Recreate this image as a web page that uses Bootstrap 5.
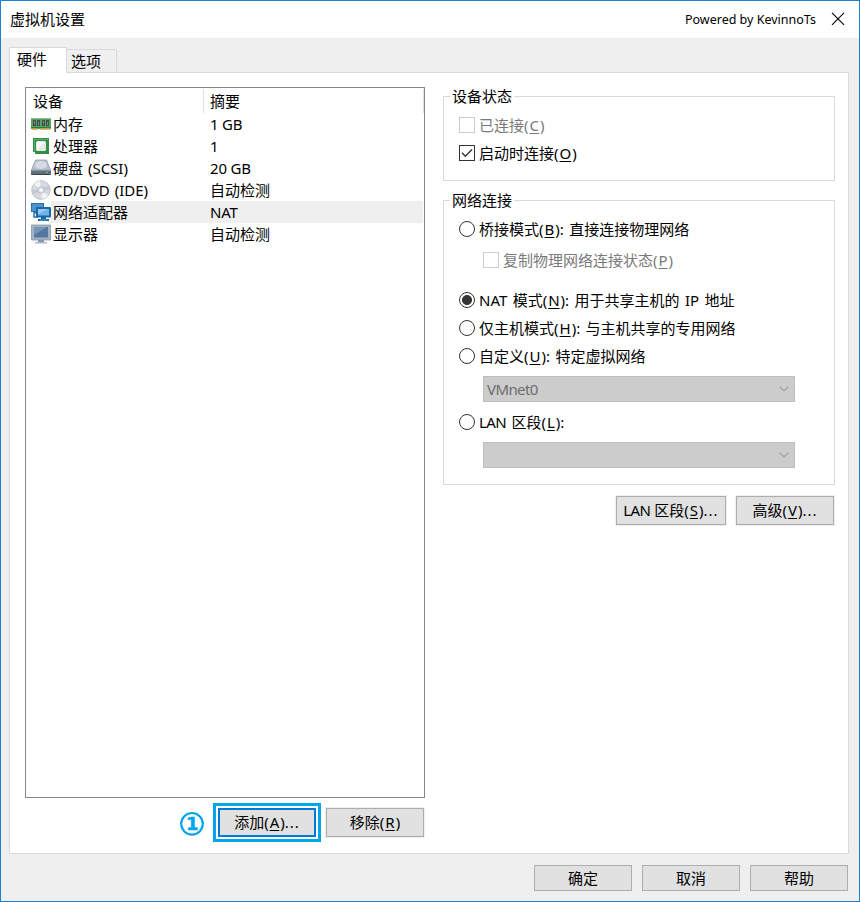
<!DOCTYPE html>
<html lang="zh-CN">
<head>
<meta charset="utf-8">
<title>虚拟机设置</title>
<link rel="stylesheet" href="https://cdn.jsdelivr.net/npm/bootstrap@5.3.0/dist/css/bootstrap.min.css">
<style>
body{font:15px/22px "Noto Sans","Noto Sans CJK SC",sans-serif;color:#000;background:#fff;overflow:hidden}
svg{display:block;flex:none}
u{text-underline-offset:2px;text-decoration-thickness:1px;margin:0 1px}
.win{width:860px;height:902px;border:1px solid #1c80cf;background:#efefef}
.titlebar{height:37px;background:#fff;padding:0 13px 2px 9px}
.byline{font-size:12.5px;margin:2px 14px 0 0}
.tabs{height:34px;padding:9px 0 0 8px}
.tabs .nav-link{color:#000;border:1px solid #d9d9d9;border-radius:0;background:#efefef;border-bottom:0;line-height:22px;padding:0;text-align:left}
.tabs .nav-link.active{width:58px;height:26px;background:#fff;margin-bottom:-1px;position:relative;color:#000;padding:0 0 4px 7px}
.tabs .nav-link.idle{width:50px;height:23px;margin-top:2px;border-left:0;padding-left:4px}
.pane{margin:0 10px 0 8px;height:782px;border:1px solid #d9d9d9;background:#fff;padding:14px 13px 0 15px}
.devices{width:400px;height:711px;border:1px solid #828790}
.dev-head{height:25px}
.dev-head>span{height:24px;margin-top:1px;line-height:24px;border-right:1px solid #e0e0e0}
.name-col{width:178px;flex:none;padding-left:7px}
.dev-row{height:22px;line-height:22px;word-spacing:1px}
.dev-row svg{margin-left:5px}
.dev-name{width:153px;height:22px;padding-left:2px;flex:none;white-space:nowrap}
.dev-val{width:219px;height:22px;padding-left:6px}
.dev-row .dev-val{word-spacing:0;letter-spacing:-.2px}
.dev-row .cjk-val{letter-spacing:0}
.chosen .dev-name,.chosen .dev-val{background:#efefef}
.win .btn{--bs-btn-color:#000;--bs-btn-bg:#e1e1e1;--bs-btn-border-color:#adadad;border-radius:0;font-size:15px;line-height:22px;padding:0 0 1px;width:98px;white-space:nowrap}
.win .tall{height:29px;box-shadow:0 0 0 1px #efefef}
.win .lan-btn{width:110px}
.win .add-btn{height:29px;border:2px solid #0078d7;outline:3px solid #00a5ec;outline-offset:2px}
.dots{letter-spacing:1px}
.left-actions{gap:10px;margin-top:10px;padding-right:1px}
.side{width:392px}
.group{border:1px solid #d9d9d9}
.group-title{width:max-content;margin:-12px 0 0 6px;padding:0 2px;background:#fff;height:22px}
.g-state{height:85px;margin-top:9px}
.g-net{height:285px;margin-top:19px}
.opt{height:28px;padding-left:15px;white-space:nowrap;word-spacing:1.5px}
.first{margin-top:4px}
.opt label{margin:-1px 0 0 4px}
.opt .form-check-input{width:16px;height:16px;margin:0;flex:none;border:1px solid #333;background-color:#fff;opacity:1}
.opt .form-check-input[type=checkbox]{border-radius:0}
.opt .form-check-input:checked[type=checkbox]{background-image:url("data:image/svg+xml,%3csvg xmlns='http://www.w3.org/2000/svg' viewBox='0 0 14 14'%3e%3cpath d='M2 6.8 5.3 10.2 12 3.5' fill='none' stroke='%23333' stroke-width='1.4'/%3e%3c/svg%3e")}
.opt .form-check-input:checked[type=radio]{background-image:radial-gradient(circle,#333 4.6px,transparent 5.3px)}
.opt .form-check-input:disabled{border-color:#ccc}
.opt .form-check-input:disabled~label{opacity:1}
.sub{padding-left:39px;margin-top:3px}
.nat{margin-top:12px}
.latin{letter-spacing:-.6px}
.off{color:#7a7a7a}
.combo{width:312px;height:26px;margin:6px 0 6px 39px;background:#ccc;border:1px solid #bfbfbf;color:#6d6d6d;padding:0 4px 0 3px}
.side-actions{gap:10px;margin-top:11px;padding-right:1px}
.foot{padding:11px 11px 0 0;gap:10px}
.foot .btn{height:26px}
</style>
</head>
<body>
<div class="win">
  <div class="titlebar d-flex align-items-center">
    <span class="me-auto">虚拟机设置</span>
    <span class="byline">Powered by KevinnoTs</span>
    <svg width="16" height="14" viewBox="0 0 16 14"><path d="M2 .8 14 12.800M14 .8 2 12.800" stroke="#000" stroke-width="1.100"/></svg>
  </div>
  <nav class="tabs nav">
    <button class="nav-link active">硬件</button><button class="nav-link idle">选项</button>
  </nav>
  <main class="pane d-flex justify-content-between align-items-start">
    <section>
      <div class="devices">
        <div class="dev-head d-flex"><span class="name-col">设备</span><span class="dev-val flex-grow-1">摘要</span></div>
        <div class="dev-row d-flex align-items-center">
          <svg width="20" height="20" viewBox="0 0 20 20"><path fill="#4fa65c" d="M0 4h20v11H0z"/><path fill="#86c489" d="M0 4h20v1H0z"/><path fill="#464e50" d="M2 6h3v6H2zm4 0h3v6H6zm5 0h3v6h-3zm4 0h3v6h-3z"/><path stroke="#7c8588" d="M3.500 7v3M7.500 8v3M12.500 7v3M16.500 8v3"/><path fill="#2f7d40" d="M0 13h20v1H0z"/><path fill="#efb267" d="M1 14.500h6V16H1zm8 0h10V16H9z"/></svg>
          <span class="dev-name">内存</span><span class="dev-val">1 GB</span></div>
        <div class="dev-row d-flex align-items-center">
          <svg width="20" height="20" viewBox="0 0 20 20"><path fill="#2e9049" d="M2 2h16v16H2z"/><path fill="#58a96a" d="M3 3h14v1H4v13H3z"/><rect x="5" y="5" width="10" height="10" rx="1.500" fill="#e6e8e6"/><path fill="#fafafa" d="M6 6h8l-8 8z"/><path fill="#fff" d="M2 16h2v2H2z"/></svg>
          <span class="dev-name">处理器</span><span class="dev-val">1</span></div>
        <div class="dev-row d-flex align-items-center">
          <svg width="20" height="20" viewBox="0 0 20 20"><path fill="#b7c1cd" stroke="#94a0ad" stroke-width=".8" d="M4.500 2h11L19.500 12H.500z"/><ellipse cx="10" cy="7" rx="6" ry="4" fill="#d4dbe3"/><path fill="#626d7b" d="M0 12h20v5H0z"/><path fill="#8d98a5" d="M0 12h20v1H0z"/><path fill="#39424d" d="M1 16h18v1H1z"/><path fill="#59db83" d="M15 14h2v1h-2z"/></svg>
          <span class="dev-name">硬盘 (SCSI)</span><span class="dev-val">20 GB</span></div>
        <div class="dev-row d-flex align-items-center">
          <svg width="20" height="20" viewBox="0 0 20 20"><circle cx="10" cy="10" r="9.300" fill="#d6dae0" stroke="#b3b8be" stroke-width=".8"/><path fill="#f1f3f5" d="M10 10 3 4a9 9 0 0 1 6-3zM10 10l7 6a9 9 0 0 1-6 3z"/><path fill="#c3c9d1" d="m10 10 8-5a9 9 0 0 1 1 5zM10 10l-8 5a9 9 0 0 1-1-5z"/><circle cx="10" cy="10" r="3.300" fill="#dfe3e8" stroke="#a6adb7" stroke-width=".7"/><circle cx="10" cy="10" r="1.400" fill="#fff"/></svg>
          <span class="dev-name">CD/DVD (IDE)</span><span class="dev-val cjk-val">自动检测</span></div>
        <div class="dev-row chosen d-flex align-items-center">
          <svg width="20" height="20" viewBox="0 0 20 20"><path fill="#2872ac" d="M0 1h13v9H0z"/><path fill="#4b94d0" d="M1 2h11v7H1z"/><path fill="none" stroke="#2574ae" stroke-width="1.500" d="M3 10v5h4"/><path fill="#2872ac" d="M3 10h3v1.500H3z"/><rect x="5" y="5" width="15" height="10.500" rx="1" fill="#1b67a5"/><path fill="#6db4ea" d="M7 7h11v6.500H7z"/><path fill="#97cbf2" d="M7 7h10L7 12z"/><path fill="#1b67a5" d="M10 15h5v2h3v2H7v-2h3z"/><path fill="#5a9ed5" d="M9 17.500h7v1H9z"/></svg>
          <span class="dev-name">网络适配器</span><span class="dev-val">NAT</span></div>
        <div class="dev-row d-flex align-items-center">
          <svg width="20" height="20" viewBox="0 0 20 20"><path fill="#a5b4c5" stroke="#8496aa" stroke-width=".8" d="M.500 1h19v15H.500z"/><path fill="#55779f" d="M3 3h14v10.500H3z"/><path fill="#7895b6" d="M3 3h13L3 11z"/><path fill="#8797aa" d="M7 16h6v2H7z"/><path fill="#acb8c6" d="M4 18h12v1.500H4z"/></svg>
          <span class="dev-name">显示器</span><span class="dev-val cjk-val">自动检测</span></div>
      </div>
      <div class="left-actions d-flex justify-content-end align-items-center">
        <svg class="me-1" width="26" height="29" viewBox="1 0 26 29"><circle cx="15" cy="15.800" r="10.800" fill="none" stroke="#00a5ec" stroke-width="2.200"/><text x="15.200" y="22.100" text-anchor="middle" font-family="DejaVu Sans" font-weight="700" font-size="18" fill="#00a5ec" stroke="#00a5ec" stroke-width=".5">1</text></svg>
        <button class="btn add-btn">添加(<u>A</u>)<span class="dots">...</span></button>
        <button class="btn tall">移除(<u>R</u>)</button>
      </div>
    </section>
    <section class="side">
      <div class="group g-state">
        <div class="group-title">设备状态</div>
        <div class="opt off first d-flex align-items-center"><input class="form-check-input" type="checkbox" id="c1" disabled><label for="c1">已连接(<u>C</u>)</label></div>
        <div class="opt d-flex align-items-center"><input class="form-check-input" type="checkbox" id="c2" checked><label for="c2">启动时连接(<u>O</u>)</label></div>
      </div>
      <div class="group g-net">
        <div class="group-title">网络连接</div>
        <div class="opt first d-flex align-items-center"><input class="form-check-input" type="radio" name="net" id="r1"><label for="r1">桥接模式(<u>B</u>): 直接连接物理网络</label></div>
        <div class="opt sub off d-flex align-items-center"><input class="form-check-input" type="checkbox" id="c3" disabled><label for="c3">复制物理网络连接状态(<u>P</u>)</label></div>
        <div class="opt nat d-flex align-items-center"><input class="form-check-input" type="radio" name="net" id="r2" checked><label for="r2">NAT 模式(<u>N</u>): 用于共享主机的 IP 地址</label></div>
        <div class="opt d-flex align-items-center"><input class="form-check-input" type="radio" name="net" id="r3"><label for="r3">仅主机模式(<u>H</u>): 与主机共享的专用网络</label></div>
        <div class="opt d-flex align-items-center"><input class="form-check-input" type="radio" name="net" id="r4"><label for="r4">自定义(<u>U</u>): 特定虚拟网络</label></div>
        <div class="combo d-flex align-items-center justify-content-between"><span class="latin">VMnet0</span><svg width="12" height="8" viewBox="0 0 12 8"><path d="m1.500 1.500 4.500 4.500 4.500-4.500" fill="none" stroke="#a3a3a3" stroke-width="1.200"/></svg></div>
        <div class="opt d-flex align-items-center"><input class="form-check-input" type="radio" name="net" id="r5"><label for="r5"><span class="latin">LAN</span> 区段(<u>L</u>):</label></div>
        <div class="combo d-flex align-items-center justify-content-end"><svg width="12" height="8" viewBox="0 0 12 8"><path d="m1.500 1.500 4.500 4.500 4.500-4.500" fill="none" stroke="#a3a3a3" stroke-width="1.200"/></svg></div>
      </div>
      <div class="side-actions d-flex justify-content-end">
        <button class="btn tall lan-btn"><span class="latin">LAN</span> 区段(<u>S</u>)<span class="dots">...</span></button>
        <button class="btn tall">高级(<u>V</u>)<span class="dots">...</span></button>
      </div>
    </section>
  </main>
  <div class="foot d-flex justify-content-end">
    <button class="btn">确定</button><button class="btn">取消</button><button class="btn">帮助</button>
  </div>
</div>
<script src="https://cdn.jsdelivr.net/npm/bootstrap@5.3.0/dist/js/bootstrap.bundle.min.js"></script>
</body>
</html>
